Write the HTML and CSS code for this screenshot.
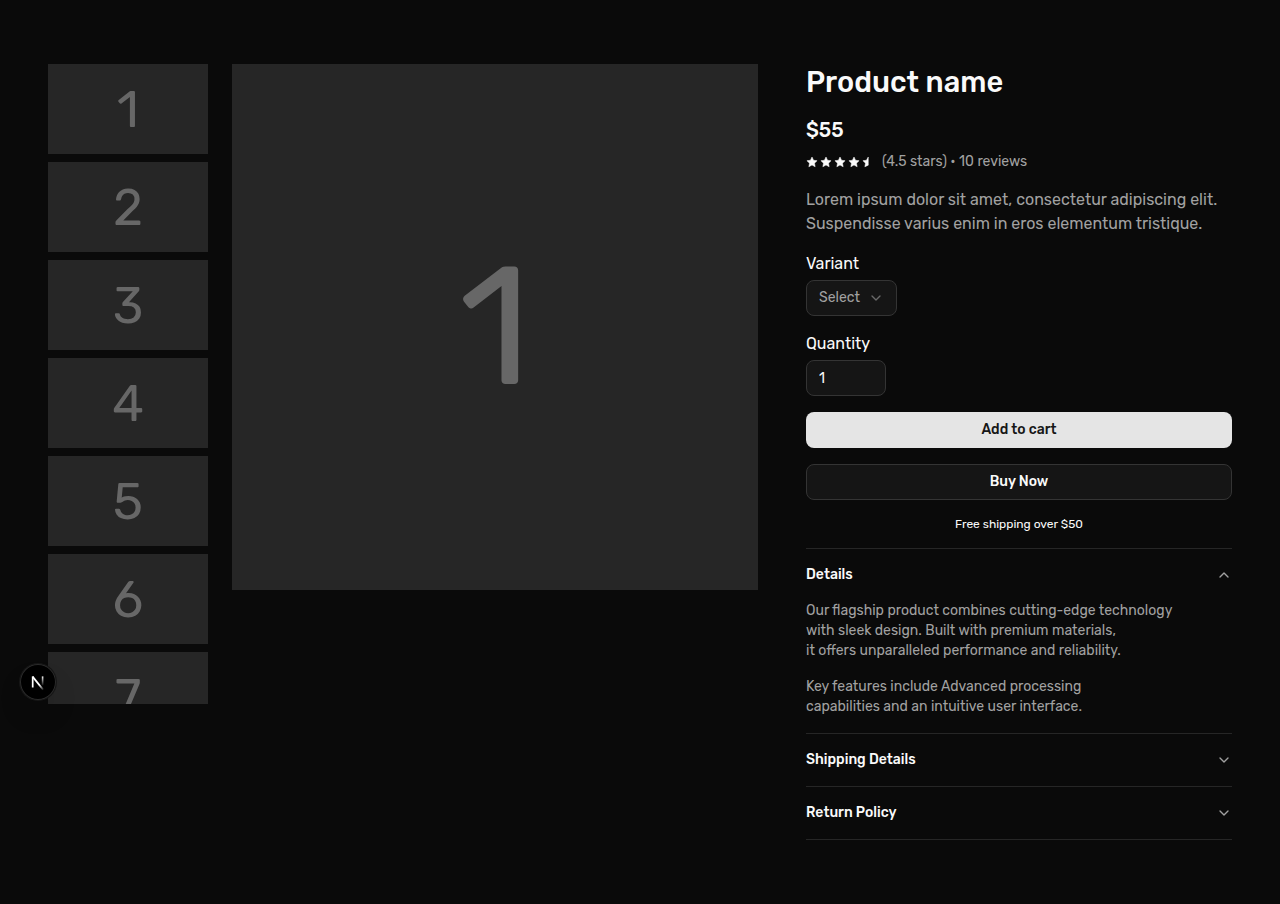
FILE: index.html
```html
<!DOCTYPE html>
<html lang="en">
<head>
<meta charset="utf-8">
<meta name="viewport" content="width=device-width, initial-scale=1">
<title>Product name</title>
<link rel="stylesheet" href="styles.css">
</head>
<body>
<svg class="sprite" aria-hidden="true">
  <symbol id="star" viewBox="0 0 24 24"><path d="M12 2l3.1 6.5 7.1.9-5.2 4.9 1.3 7.2-6.3-3.5-6.3 3.5L7 14.300l-5.200-4.900 7.100-.9z"/></symbol>
  <symbol id="half-star" viewBox="0 0 24 24"><path d="M12.500 2v16.300l-6.800 3.200L7 14.300 1.800 9.400l7.100-.9z"/></symbol>
  <symbol id="chevron" viewBox="0 0 24 24"><path d="M6 9l6 6 6-6"/></symbol>
</svg>
<main class="product">
  <section class="gallery" aria-label="Product images">
    <div class="thumbs">
      <button class="thumb" type="button">1</button>
      <button class="thumb" type="button">2</button>
      <button class="thumb" type="button">3</button>
      <button class="thumb" type="button">4</button>
      <button class="thumb" type="button">5</button>
      <button class="thumb" type="button">6</button>
      <button class="thumb" type="button">7</button>
    </div>
    <div class="preview">1</div>
  </section>

  <section class="info">
    <h1 class="title">Product name</h1>
    <p class="price">$55</p>
    <div class="rating">
      <span class="stars" aria-hidden="true">
        <svg class="star"><use href="#star"/></svg>
        <svg class="star"><use href="#star"/></svg>
        <svg class="star"><use href="#star"/></svg>
        <svg class="star"><use href="#star"/></svg>
        <svg class="star"><use href="#half-star"/></svg>
      </span>
      <span>(4.5 stars) • 10 reviews</span>
    </div>
    <p class="summary">Lorem ipsum dolor sit amet, consectetur adipiscing elit. Suspendisse varius enim in eros elementum tristique.</p>

    <form class="form">
      <div class="field">
        <label class="label" for="variant">Variant</label>
        <div class="select-wrap">
          <select class="control select" id="variant"><option>Select</option></select>
          <svg class="chevron select-icon" aria-hidden="true"><use href="#chevron"/></svg>
        </div>
      </div>
      <div class="field">
        <label class="label" for="quantity">Quantity</label>
        <input class="control quantity" id="quantity" type="text" inputmode="numeric" value="1">
      </div>
      <button class="button primary" type="button">Add to cart</button>
      <button class="button outline" type="button">Buy Now</button>
      <p class="note">Free shipping over $50</p>
    </form>

    <div class="accordion">
      <div class="item">
        <button class="trigger" type="button" aria-expanded="true" aria-controls="details">Details
          <svg class="chevron open" aria-hidden="true"><use href="#chevron"/></svg></button>
        <div class="content" id="details">
          <p>Our flagship product combines cutting-edge technology<br>with sleek design. Built with premium materials,<br>it offers unparalleled performance and reliability.</p>
          <p>Key features include Advanced processing<br>capabilities and an intuitive user interface.</p>
        </div>
      </div>
      <div class="item">
        <button class="trigger" type="button" aria-expanded="false">Shipping Details
          <svg class="chevron" aria-hidden="true"><use href="#chevron"/></svg></button>
      </div>
      <div class="item">
        <button class="trigger" type="button" aria-expanded="false">Return Policy
          <svg class="chevron" aria-hidden="true"><use href="#chevron"/></svg></button>
      </div>
    </div>
  </section>
</main>

<button class="dev-badge" type="button" aria-label="Open developer tools">
  <svg width="36" height="36" viewBox="0 0 36 36" fill="none" aria-hidden="true">
    <defs>
      <linearGradient id="fade-diagonal" x1="17" y1="17" x2="24" y2="26" gradientUnits="userSpaceOnUse"><stop offset=".4" stop-color="#fff"/><stop offset="1" stop-color="#fff" stop-opacity="0"/></linearGradient>
      <linearGradient id="fade-stem" x1="23" y1="12" x2="23" y2="22" gradientUnits="userSpaceOnUse"><stop stop-color="#fff"/><stop offset="1" stop-color="#fff" stop-opacity="0"/></linearGradient>
    </defs>
    <path d="M12.700 23.500V12.400" stroke="#fff" stroke-width="1.700"/>
    <path d="M12.600 12.600L23.200 25.800" stroke="url(#fade-diagonal)" stroke-width="1.800"/>
    <path d="M22.600 12.400v9" stroke="url(#fade-stem)" stroke-width="1.600"/>
  </svg>
</button>
</body>
</html>
```
FILE: styles.css
```css
* { box-sizing: border-box; }

body {
  margin: 0;
  background: #0a0a0a;
  color: #fafafa;
  font-family: Rubik, Inter, sans-serif;
  font-size: 14px;
  line-height: 20px;
}

h1, p { margin: 0; }

button, input, select { font: inherit; color: inherit; }

button { cursor: pointer; }

.sprite { position: absolute; width: 0; height: 0; }

.product {
  display: grid;
  grid-template-columns: 5fr 3fr;
  gap: 48px;
  align-items: start;
  padding: 64px 48px;
}

.gallery {
  display: grid;
  grid-template-columns: 160px 1fr;
  gap: 24px;
  align-items: start;
}

.thumbs {
  display: flex;
  flex-direction: column;
  gap: 8px;
  max-height: 640px;
  overflow: hidden;
}

.thumb, .preview {
  display: flex;
  flex-shrink: 0;
  align-items: center;
  justify-content: center;
  padding: 0;
  border: 0;
  background: #262626;
  color: #676767;
  line-height: 1;
}

.thumb { aspect-ratio: 16 / 9; font-size: 51px; }

.preview { aspect-ratio: 1; font-size: 168px; }

.info { min-width: 0; }

.title { font-size: 29px; line-height: 36px; font-weight: 500; }

.price { margin-top: 16px; font-size: 20px; line-height: 28px; font-weight: 500; }

.rating {
  display: flex;
  align-items: center;
  gap: 8px;
  margin-top: 8px;
  color: #a1a1a1;
}

.stars { display: flex; gap: 2px; color: #fafafa; }

.star {
  width: 12px;
  height: 12px;
  fill: currentColor;
  stroke: currentColor;
  stroke-width: 1;
  stroke-linejoin: round;
}

.summary { margin-top: 16px; color: #a1a1a1; font-size: 16px; line-height: 24px; }

.form { display: flex; flex-direction: column; gap: 16px; margin-top: 16px; }

.field { display: flex; flex-direction: column; align-items: flex-start; gap: 4px; }

.label { font-size: 16px; line-height: 24px; }

.control {
  height: 36px;
  padding: 0 12px;
  border: 1px solid #343434;
  border-radius: 8px;
  background: #151515;
}

.select-wrap { display: grid; align-items: center; }

.select {
  grid-area: 1 / 1;
  width: 91px;
  appearance: none;
  color: #a1a1a1;
}

.chevron {
  flex-shrink: 0;
  width: 16px;
  height: 16px;
  fill: none;
  stroke: #a1a1a1;
  stroke-width: 2;
  stroke-linecap: round;
  stroke-linejoin: round;
}

.select-icon {
  grid-area: 1 / 1;
  justify-self: end;
  margin-right: 13px;
  opacity: 0.6;
  pointer-events: none;
}

.open { transform: rotate(180deg); }

.quantity { width: 80px; }

.button { height: 36px; padding: 0 16px; border: 0; border-radius: 8px; font-weight: 500; }

.primary { background: #e5e5e5; color: #171717; }

.outline { border: 1px solid #343434; background: #151515; }

.note { text-align: center; font-size: 12px; line-height: 16px; }

.accordion { margin-top: 16px; border-top: 1px solid #262626; }

.item { border-bottom: 1px solid #262626; }

.trigger {
  display: flex;
  align-items: center;
  justify-content: space-between;
  width: 100%;
  padding: 16px 0;
  border: 0;
  background: none;
  font-weight: 500;
}

.content {
  display: flex;
  flex-direction: column;
  gap: 16px;
  padding-bottom: 16px;
  color: #a1a1a1;
}

.dev-badge {
  position: absolute;
  top: 664px;
  left: 20px;
  width: 36px;
  height: 36px;
  padding: 0;
  border: 0;
  border-radius: 50%;
  background: #000;
  box-shadow: 0 0 0 1px #171717, inset 0 0 0 1px #2b2b2b, 0 16px 32px -8px #0000003d;
}
```
